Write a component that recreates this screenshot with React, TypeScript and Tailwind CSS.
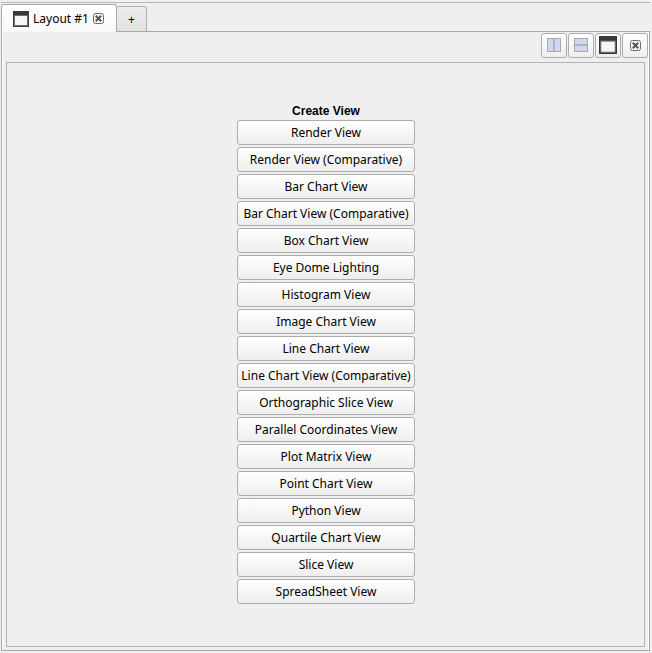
const views: string[] = [
  'Render View',
  'Render View (Comparative)',
  'Bar Chart View',
  'Bar Chart View (Comparative)',
  'Box Chart View',
  'Eye Dome Lighting',
  'Histogram View',
  'Image Chart View',
  'Line Chart View',
  'Line Chart View (Comparative)',
  'Orthographic Slice View',
  'Parallel Coordinates View',
  'Plot Matrix View',
  'Point Chart View',
  'Python View',
  'Quartile Chart View',
  'Slice View',
  'SpreadSheet View',
];

function WindowIcon({ className }: { className: string }) {
  return (
    <svg className={className} viewBox="0 0 16 16" aria-hidden="true">
      <rect width="16" height="16" fill="#38393d" />
      <rect x="1" y="4" width="14" height="11" fill="#6c6d70" />
      <rect x="2" y="5" width="12" height="9" fill="#f6f6f6" />
    </svg>
  );
}

function CloseIcon() {
  return (
    <svg className="size-3" viewBox="0 0 12 12" fill="none" aria-hidden="true">
      <rect x="1.5" y="1.5" width="10" height="10" rx="2" stroke="#6b6b68" fill="#f6f6f5" />
      <path d="M3.8 3.8 9.2 9.2M9.2 3.8 3.8 9.2" stroke="#555551" strokeWidth="2" />
    </svg>
  );
}

function SplitIcon({ vertical }: { vertical?: boolean }) {
  return (
    <svg className="size-[14px]" viewBox="0 0 14 14" aria-hidden="true">
      <rect x="0.5" y="0.5" width="13" height="13" fill="#d1d7ee" stroke="#a9a9ab" />
      <path d={vertical ? 'M1 7H13' : 'M7 1V13'} stroke="#a0a2a8" strokeWidth="1.4" />
    </svg>
  );
}

const toolButton =
  'flex h-[25px] w-[26px] items-center justify-center rounded-[3px] border border-[#adadad] bg-linear-to-b from-white to-[#eeeeee] pb-px';

export default function App() {
  return (
    <div className="flex min-h-screen flex-col bg-[#efefef] py-0.5 pr-0.5 pl-px font-['Noto_Sans',sans-serif] text-xs text-black">
      <div className="h-0.5 border-t border-[#b8b8b8]" />
      <div className="flex items-end" role="tablist">
        <div className="z-10 -mb-px flex h-[28px] w-[116px] items-center gap-[3px] rounded-t-[3px] border border-b-0 border-[#a9a9a9] bg-linear-to-b from-white to-[#f8f8f8] pt-px pl-[11px]">
          <button role="tab" aria-selected="true" className="flex items-center gap-1 whitespace-nowrap">
            <WindowIcon className="size-4" />
            Layout #1
          </button>
          <button aria-label="Close layout" className="pb-0.5">
            <CloseIcon />
          </button>
        </div>
        <button
          role="tab"
          aria-selected="false"
          aria-label="New layout"
          className="-mb-px h-[26px] w-[30px] rounded-t-[3px] border border-l-0 border-[#b0b0b0] bg-linear-to-b from-[#ececec] to-[#e2e2e2] pt-0.5"
        >
          +
        </button>
      </div>
      <main className="flex flex-1 flex-col border border-[#a9a9a9] pr-1 pb-[3px] pl-1 shadow-[inset_1px_0_0_#ffffff,inset_-1px_0_0_#ffffff]">
        <div className="-mr-1 flex h-[30px] items-start justify-end gap-px pt-px pr-px">
          <button aria-label="Split horizontally" className={toolButton}>
            <SplitIcon />
          </button>
          <button aria-label="Split vertically" className={toolButton}>
            <SplitIcon vertical />
          </button>
          <button aria-label="Maximize" className={toolButton}>
            <WindowIcon className="size-[18px] shrink-0" />
          </button>
          <button aria-label="Close view" className={toolButton}>
            <CloseIcon />
          </button>
        </div>
        <section className="flex flex-1 flex-col items-center justify-center border border-[#b3b3b3] pb-0.5 pl-px">
          <h1 className="h-[17px] font-['Liberation_Sans',Arial,sans-serif] text-xs leading-4 font-bold">Create View</h1>
          <div className="flex w-[178px] flex-col gap-0.5">
            {views.map((view) => (
              <button
                key={view}
                className="h-[25px] rounded-[3px] border border-[#adadad] bg-linear-to-b from-white to-[#eeeeee] leading-4 whitespace-nowrap"
              >
                {view}
              </button>
            ))}
          </div>
        </section>
      </main>
    </div>
  );
}
